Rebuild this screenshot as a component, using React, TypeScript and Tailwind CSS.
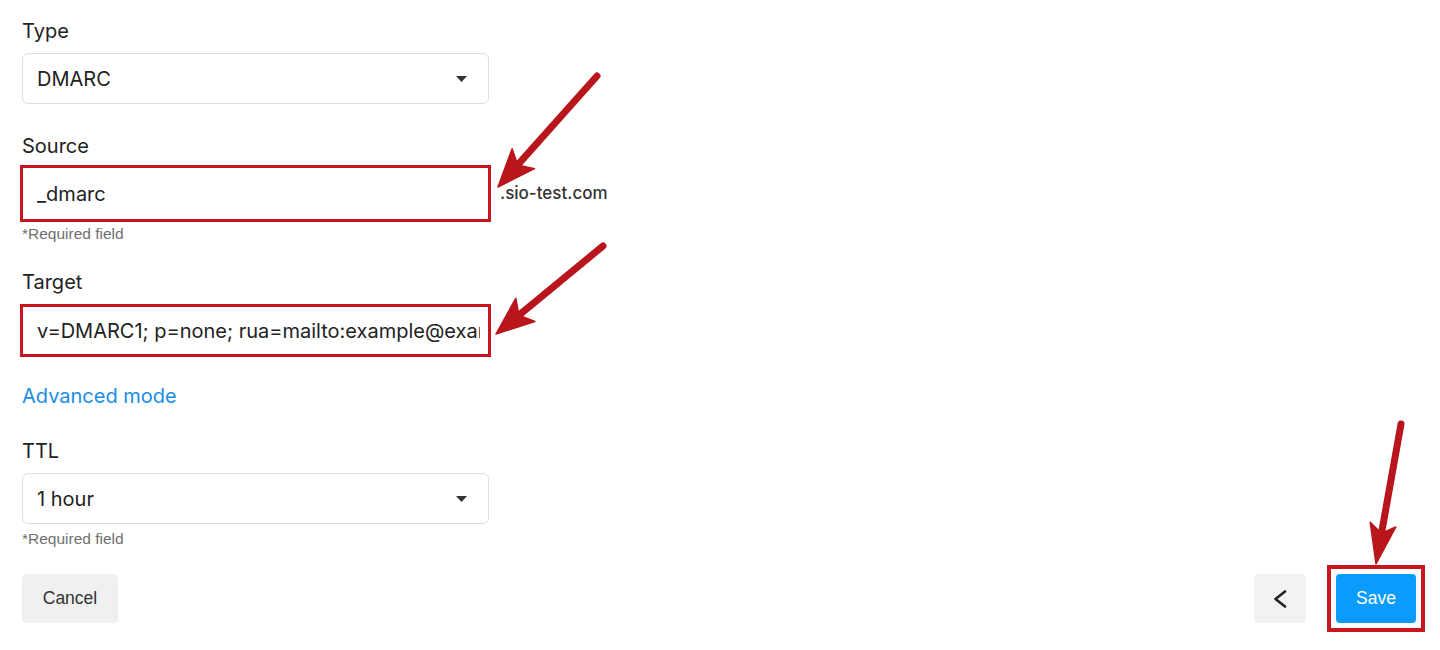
import React from "react";

function Arrow({ x1, y1, x2, y2, head = 38, half = 15, w = 7 }: { x1: number; y1: number; x2: number; y2: number; head?: number; half?: number; w?: number }) {
  const dx = x2 - x1;
  const dy = y2 - y1;
  const len = Math.sqrt(dx * dx + dy * dy);
  const ux = dx / len;
  const uy = dy / len;
  const bx = x2 - head * ux;
  const by = y2 - head * uy;
  const px = -uy;
  const py = ux;
  const nx = x2 - head * 0.78 * ux;
  const ny = y2 - head * 0.78 * uy;
  const pts = `${x2},${y2} ${bx + half * px},${by + half * py} ${nx},${ny} ${bx - half * px},${by - half * py}`;
  return (
    <g>
      <line x1={x1} y1={y1} x2={nx} y2={ny} stroke="#b8161c" strokeWidth={w} strokeLinecap="round" />
      <polygon points={pts} fill="#b8161c" stroke="#b8161c" strokeWidth={1.5} strokeLinejoin="round" />
    </g>
  );
}

function Caret() {
  return (
    <svg width="11" height="6" viewBox="0 0 11 6">
      <polygon points="0,0 11,0 5.5,6" fill="#333" />
    </svg>
  );
}

function Label({ children, className = "" }: { children: React.ReactNode; className?: string }) {
  return <div className={`h-[24px] text-[20px] leading-[24px] text-[#222] ${className}`}>{children}</div>;
}

function Required({ className = "" }: { className?: string }) {
  return (
    <div className={`font-['Liberation_Sans',Arial,sans-serif] text-[15.5px] leading-[18px] text-[#6f6f6f] ${className}`}>
      *Required field
    </div>
  );
}

function Select({ value, className = "" }: { value: string; className?: string }) {
  return (
    <div
      className={`flex h-[51px] w-[467px] items-center justify-between rounded-[6px] border border-[#dedede] bg-white pl-[14px] pr-[21px] text-[20px] text-[#222] ${className}`}
    >
      <span>{value}</span>
      <Caret />
    </div>
  );
}

export default function App() {
  return (
    <div className="relative h-[650px] w-full overflow-hidden bg-white font-['Inter',sans-serif] text-[#222]">
      <div className="flex flex-col px-[22px] pt-[19px]">
        <Label>Type</Label>
        <Select value="DMARC" className="mt-[10px]" />

        <Label className="mt-[30px]">Source</Label>
        <div className="-ml-[2px] mt-[7px] flex items-center">
          <div className="h-[57px] w-[471px] border-[3px] border-[#c8161e] bg-white">
            <input
              readOnly
              value="_dmarc"
              className="h-full w-full bg-transparent pl-[14px] text-[20px] text-[#222] outline-none"
            />
          </div>
          <span className="ml-[9px] text-[17px] font-medium text-[#333]">.sio-test.com</span>
        </div>
        <Required className="mt-[3px]" />

        <Label className="mt-[27px]">Target</Label>
        <div className="-ml-[2px] mt-[10px] h-[53px] w-[471px] border-[3px] border-[#c8161e] bg-white">
          <input
            readOnly
            value="v=DMARC1; p=none; rua=mailto:example@example.com"
            className="h-full w-full bg-transparent pl-[14px] pr-[8px] text-[20px] text-[#222] outline-none"
          />
        </div>

        <div className="mt-[27px] h-[24px] text-[20px] leading-[24px] text-[#1a8de6]">Advanced mode</div>

        <Label className="mt-[31px]">TTL</Label>
        <Select value="1 hour" className="mt-[10px]" />
        <Required className="mt-[6px]" />

        <div className="mt-[17px] flex items-center justify-between">
          <button className="flex h-[49px] w-[96px] items-center justify-center rounded-[4px] bg-[#f0f0f0] font-['Liberation_Sans',Arial,sans-serif] text-[17.5px] text-[#333]">
            Cancel
          </button>
          <div className="-mr-[7px] flex items-center gap-[21px]">
            <button className="flex h-[49px] w-[52px] items-center justify-center rounded-[4px] bg-[#f2f2f2]">
              <svg width="14" height="18" viewBox="0 0 14 18">
                <polyline points="12,1.5 2.5,9 12,16.5" fill="none" stroke="#222" strokeWidth="2.6" strokeLinecap="round" strokeLinejoin="round" />
              </svg>
            </button>
            <div className="border-[4px] border-[#c8161e] p-[5px]">
              <button className="flex h-[49px] w-[80px] items-center justify-center rounded-[4px] bg-[#0a9bfc] font-['Liberation_Sans',Arial,sans-serif] text-[17.5px] text-white">
                Save
              </button>
            </div>
          </div>
        </div>
      </div>

      <svg className="pointer-events-none absolute left-0 top-0" width="1440" height="650" viewBox="0 0 1440 650">
        <Arrow x1={597} y1={76} x2={498} y2={187} />
        <Arrow x1={603} y1={246} x2={496} y2={334} />
        <Arrow x1={1401} y1={424} x2={1376} y2={564} head={40} half={13} />
      </svg>
    </div>
  );
}
